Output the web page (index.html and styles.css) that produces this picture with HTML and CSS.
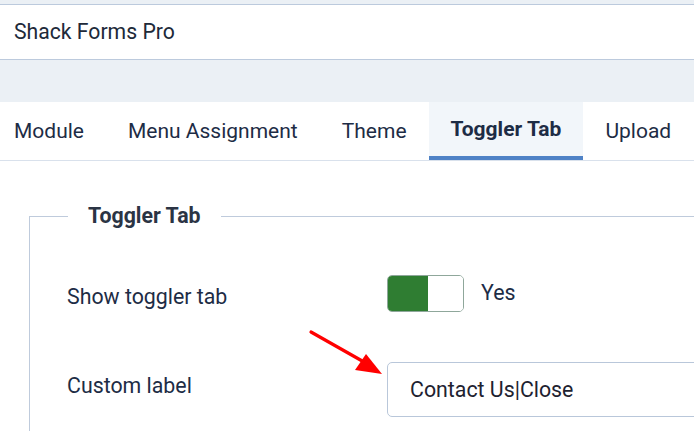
FILE: index.html
```html
<!DOCTYPE html>
<html>
<head>
<meta charset="utf-8">
<link rel="stylesheet" href="styles.css">
</head>
<body>
<div class="page">
  <div class="topstrip"></div>
  <div class="titlebar">Shack Forms Pro</div>
  <div class="graybar"></div>
  <nav class="tabs">
    <div class="tab">Module</div>
    <div class="tab">Menu Assignment</div>
    <div class="tab">Theme</div>
    <div class="tab active">Toggler Tab</div>
    <div class="tab">Upload</div>
  </nav>
  <fieldset class="group">
    <legend>Toggler Tab</legend>
    <div class="row row-switch">
      <div class="label">Show toggler tab</div>
      <div class="control">
        <div class="switch"><span class="on"></span><span class="off"></span></div>
        <span class="yes">Yes</span>
      </div>
    </div>
    <div class="row row-input">
      <div class="label">Custom label</div>
      <div class="control">
        <div class="input">Contact Us|Close</div>
      </div>
    </div>
  </fieldset>
  <svg class="arrow" width="694" height="431" viewBox="0 0 694 431">
    <line x1="311" y1="332" x2="364" y2="362" stroke="#ff0000" stroke-width="3.2" stroke-linecap="round"/>
    <polygon points="382,374 366,354 355,370" fill="#ff0000"/>
  </svg>
</div>
</body>
</html>
```
FILE: styles.css
```css
html, body {
  margin: 0;
  padding: 0;
  background: #ffffff;
}
.page {
  position: relative;
  width: 694px;
  height: 431px;
  overflow: hidden;
  font-family: Roboto, "Liberation Sans", sans-serif;
  font-size: 21.33px;
  color: #1d2c45;
}
.topstrip {
  height: 4px;
  background: #ebf0f5;
  border-bottom: 1px solid #bccadd;
}
.titlebar {
  height: 54px;
  border-bottom: 1px solid #bccadd;
  padding-left: 14px;
  font-size: 21.2px;
  line-height: 54px;
  color: #202939;
}
.graybar {
  height: 42px;
  background: #ebf0f5;
}
.tabs {
  display: flex;
  height: 58px;
  margin-left: -8px;
  border-bottom: 1px solid #d9e1ec;
}
.tab {
  flex-shrink: 0;
  padding: 0 22px;
  font-size: 21px;
  line-height: 58px;
  white-space: nowrap;
}
.tab.active {
  background: #f2f6fa;
  font-weight: 700;
  line-height: 54px;
  border-bottom: 4px solid #4f82c6;
}
.group {
  margin: 42px 0 0 29px;
  padding: 0 0 0 38px;
  border: 1px solid #bfcbdc;
  border-right: none;
  border-bottom: none;
  min-width: 0;
  height: 300px;
}
.group legend {
  padding: 0 20px;
  font-size: 21.33px;
  font-weight: 700;
  line-height: 26px;
  color: #2b3444;
}
.row {
  display: flex;
  align-items: center;
}
.row-switch {
  margin-top: 46px;
}
.row-input {
  margin-top: 50px;
}
.label {
  flex-shrink: 0;
  width: 320px;
  margin-left: -1px;
  font-size: 21.33px;
  line-height: 25px;
}
.row-switch .label {
  padding-top: 5px;
}
.row-input .label {
  padding-bottom: 9px;
}
.control {
  display: flex;
  align-items: center;
  flex-shrink: 0;
}
.switch {
  display: flex;
  width: 75px;
  height: 35px;
  border: 1px solid #8fa79b;
  border-radius: 5px;
  overflow: hidden;
}
.switch .on {
  width: 40px;
  background: #2f7d32;
}
.switch .off {
  flex: 1;
  background: #ffffff;
}
.yes {
  margin-left: 17px;
  font-size: 21.33px;
  padding-bottom: 2px;
}
.input {
  width: 400px;
  height: 53px;
  border: 1px solid #b9c7da;
  border-radius: 5px;
  padding-left: 22px;
  font-size: 21.33px;
  line-height: 53px;
  color: #1e2230;
}
.arrow {
  position: absolute;
  left: 0;
  top: 0;
  pointer-events: none;
}
```
